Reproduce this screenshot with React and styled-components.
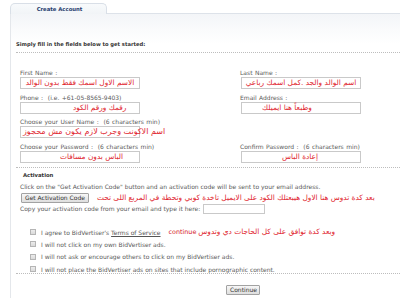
import React from "react";
import styled, { createGlobalStyle } from "styled-components";

const GlobalStyle = createGlobalStyle`
  html, body { margin: 0; padding: 0; background: #fff; overflow: hidden; }
  body { font-family: "DejaVu Sans", Verdana, sans-serif; color: #555; }
`;

const Page = styled.div`
  width: 400px;
  height: 298px;
  padding: 3px 0 0 10px;
  box-sizing: border-box;
  overflow: hidden;
`;

const TabBar = styled.div`
  display: flex;
  align-items: flex-end;
  height: 11px;
`;

const Tab = styled.div`
  width: 97px;
  height: 11px;
  box-sizing: border-box;
  border: 1px solid #d9dfe7;
  border-bottom: none;
  border-radius: 5px 5px 0 0;
  background: linear-gradient(#f8fafc, #f1f4f7);
  display: flex;
  justify-content: center;
  align-items: center;
  font-weight: bold;
  font-size: 5.3px;
  color: #1f3b6e;
  padding-left: 2px;
`;

const TabLine = styled.div`
  flex: 1;
  border-bottom: 1px solid #dde2e9;
`;

const Panel = styled.div`
  border-left: 1px solid #e4e7eb;
  background: linear-gradient(#f3f5f8 0, #fafbfc 16px, #fff 30px);
  padding: 26px 0 0 5px;
  height: 290px;
  box-sizing: border-box;
`;

const Intro = styled.div`
  font-weight: bold;
  font-size: 5.2px;
  line-height: 8px;
  color: #333;
`;

const Dotted = styled.div`
  border-top: 1px dotted #bdbdbd;
  margin-top: ${(p) => p.$mt || 0}px;
`;

const FormGrid = styled.div`
  display: grid;
  grid-template-columns: 220px 1fr;
  row-gap: 3.5px;
  padding: 15px 0 0 4px;
`;

const Field = styled.div`
  display: flex;
  flex-direction: column;
  grid-column: ${(p) => p.$col || "auto"};
`;

const Label = styled.div`
  font-size: 6px;
  line-height: 9px;
  color: #5a5a5a;
  white-space: nowrap;
  word-spacing: 0.5px;
`;

const Box = styled.div`
  width: 120px;
  height: 12px;
  box-sizing: border-box;
  border: 1px solid #c9c9c9;
  background: #fff;
  display: flex;
  align-items: center;
  justify-content: ${(p) => (p.$center ? "center" : "flex-start")};
  padding-left: ${(p) => p.$pad || 0}px;
  white-space: nowrap;
  overflow: visible;
  margin-left: ${(p) => p.$ml || 0}px;
`;

const Arabic = styled.span`
  direction: rtl;
  unicode-bidi: isolate;
  font-family: "DejaVu Sans", "Noto Sans", sans-serif;
  font-size: ${(p) => p.$size || 7.4}px;
  color: #e0242e;
  white-space: nowrap;
  line-height: 10px;
`;

const Section = styled.div`
  padding: 3px 0 0 4px;
  display: flex;
  flex-direction: column;
`;

const SectionTitle = styled.div`
  font-weight: bold;
  font-size: 5.3px;
  line-height: 8px;
  color: #333;
  padding-left: 3px;
`;

const Text = styled.div`
  font-size: 6px;
  line-height: 8px;
  color: #5a5a5a;
  white-space: nowrap;
  margin-top: ${(p) => p.$mt || 0}px;
`;

const Row = styled.div`
  display: flex;
  align-items: center;
  gap: ${(p) => p.$gap || 0}px;
  margin-top: ${(p) => p.$mt || 0}px;
`;

const Button = styled.button`
  font-family: "DejaVu Sans", Verdana, sans-serif;
  font-size: 6px;
  color: #333;
  height: 10px;
  padding: 0 3px;
  line-height: 8px;
  border: 1px solid #a2a2a2;
  border-radius: 1px;
  background: linear-gradient(#f7f7f7, #dedede);
  box-sizing: border-box;
  white-space: nowrap;
  margin-left: ${(p) => p.$ml || 0}px;
  width: ${(p) => (p.$w ? `${p.$w}px` : "auto")};
`;

const SmallBox = styled.div`
  width: 62px;
  height: 10px;
  box-sizing: border-box;
  border: 1px solid #c9c9c9;
  background: #fff;
`;

const CheckList = styled.div`
  display: flex;
  flex-direction: column;
  gap: 4.4px;
  margin-top: 14.5px;
  padding-left: 10px;
`;

const CheckRow = styled.div`
  display: flex;
  align-items: center;
  height: 8px;
  font-size: 6px;
  color: #5a5a5a;
  white-space: nowrap;
`;

const Check = styled.span`
  width: 6px;
  height: 6px;
  box-sizing: border-box;
  border: 1px solid #b5b5b5;
  background: linear-gradient(#ececec, #dadada);
  margin-right: 5px;
  flex: none;
`;

const Link = styled.span`
  text-decoration: underline;
  color: #555;
`;

const ContinueWord = styled.span`
  color: #d4131c;
  font-size: 6.4px;
  margin: 0 2px 0 8px;
`;

const Footer = styled.div`
  display: flex;
  padding-top: 11px;
`;

export default function App() {
  return (
    <>
      <GlobalStyle />
      <Page>
        <TabBar>
          <Tab>Create Account</Tab>
          <TabLine />
        </TabBar>
        <Panel>
          <Intro>Simply fill in the fields below to get started:</Intro>
          <Dotted $mt={4} />
          <FormGrid>
            <Field>
              <Label>First Name :</Label>
              <Box $center>
                <Arabic>الاسم الاول اسمك فقط بدون الوالد</Arabic>
              </Box>
            </Field>
            <Field>
              <Label>Last Name :</Label>
              <Box $center $ml={1}>
                <Arabic>اسم الوالد والجد .كمل اسمك رباعي</Arabic>
              </Box>
            </Field>
            <Field>
              <Label>Phone :&nbsp; (i.e. +61-05-8565-9403)</Label>
              <Box $pad={52}>
                <Arabic>رقمك ورقم الكود</Arabic>
              </Box>
            </Field>
            <Field>
              <Label>Email Address :</Label>
              <Box $pad={20} $ml={1}>
                <Arabic>وطبعاً هنا ايميلك</Arabic>
              </Box>
            </Field>
            <Field $col="1 / 3">
              <Label>Choose your User Name :&nbsp; (6 characters min)</Label>
              <Box $pad={2}>
                <Arabic $size={8}>اسم الاكونت وجرب لازم يكون مش محجوز</Arabic>
              </Box>
            </Field>
            <Field>
              <Label>Choose your Password :&nbsp; (6 characters min)</Label>
              <Box $pad={39}>
                <Arabic>الباس بدون مسافات</Arabic>
              </Box>
            </Field>
            <Field>
              <Label>Confirm Password :&nbsp; (6 characters min)</Label>
              <Box $pad={40} $ml={1}>
                <Arabic>إعادة الباس</Arabic>
              </Box>
            </Field>
          </FormGrid>
          <Dotted $mt={4} />
          <Section>
            <SectionTitle>Activation</SectionTitle>
            <Text $mt={4}>
              Click on the "Get Activation Code" button and an activation code will be sent to your email address.
            </Text>
            <Row $gap={8} $mt={2}>
              <Button $ml={1}>Get Activation Code</Button>
              <Arabic>
                بعد كدة تدوس هنا الاول هيبعتلك الكود على الايميل تاخدة كوبي وتحطة في المربع اللى تحت
              </Arabic>
            </Row>
            <Row $gap={3} $mt={1}>
              <Text>Copy your activation code from your email and type it here:</Text>
              <SmallBox />
            </Row>
            <CheckList>
              <CheckRow>
                <Check />
                I agree to BidVertiser's&nbsp;<Link>Terms of Service</Link>
                <ContinueWord>continue</ContinueWord>
                <Arabic>وبعد كدة توافق على كل الحاجات دي وتدوس</Arabic>
              </CheckRow>
              <CheckRow>
                <Check />
                I will not click on my own BidVertiser ads.
              </CheckRow>
              <CheckRow>
                <Check />
                I will not ask or encourage others to click on my BidVertiser ads.
              </CheckRow>
              <CheckRow>
                <Check />
                I will not place the BidVertiser ads on sites that include pornographic content.
              </CheckRow>
            </CheckList>
          </Section>
          <Dotted $mt={0} />
          <Footer>
            <Button $ml={210} $w={34}>Continue</Button>
          </Footer>
        </Panel>
      </Page>
    </>
  );
}
